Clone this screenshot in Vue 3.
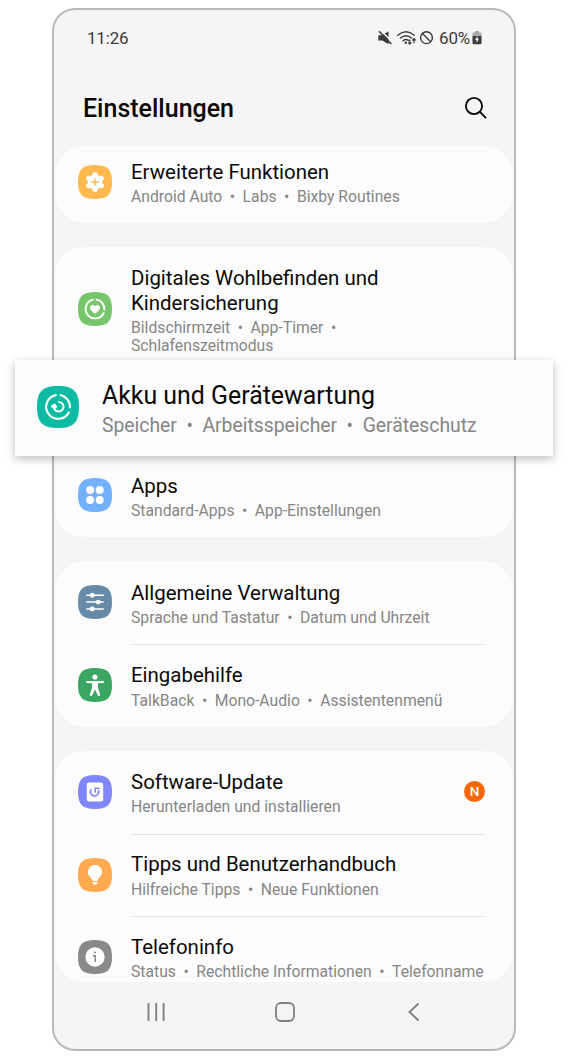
<script setup>
const cards = [
  { id: 'first', rows: [
    { icon: 'advanced', color: '#ffb94e', title: ['Erweiterte Funktionen'], sub: [['Android Auto', 'Labs', 'Bixby Routines']] },
  ] },
  { id: 'care', rows: [
    { icon: 'wellbeing', color: '#77c66e', title: ['Digitales Wohlbefinden und', 'Kindersicherung'], sub: [['Bildschirmzeit', 'App-Timer', ''], ['Schlafenszeitmodus']], tall: true },
    { icon: 'battery', color: '#0dbba4', title: ['Akku und Gerätewartung'], sub: [['Speicher', 'Arbeitsspeicher', 'Geräteschutz']], raised: true },
    { icon: 'apps', color: '#74b1fd', title: ['Apps'], sub: [['Standard-Apps', 'App-Einstellungen']] },
  ] },
  { id: 'general', rows: [
    { icon: 'sliders', color: '#678ba6', title: ['Allgemeine Verwaltung'], sub: [['Sprache und Tastatur', 'Datum und Uhrzeit']] },
    { icon: 'access', color: '#3ba662', title: ['Eingabehilfe'], sub: [['TalkBack', 'Mono-Audio', 'Assistentenmenü']], divider: true },
  ] },
  { id: 'last', rows: [
    { icon: 'update', color: '#8087fb', title: ['Software-Update'], sub: [['Herunterladen und installieren']], badge: 'N' },
    { icon: 'tips', color: '#ffaa4e', title: ['Tipps und Benutzerhandbuch'], sub: [['Hilfreiche Tipps', 'Neue Funktionen']], divider: true },
    { icon: 'info', color: '#898989', title: ['Telefoninfo'], sub: [['Status', 'Rechtliche Informationen', 'Telefonname']], divider: true },
  ] },
]
</script>

<template>
  <div class="page">
    <div class="phone">
      <div class="status">
        <span class="time">11:26</span>
        <svg class="status-icons" width="58" height="18" viewBox="0 0 58 18">
          <path d="M.3 6.200h4L10.500 2.200v13L4.300 11.500h-4z" fill="#3c3c3c" />
          <path d="M2.800 1.500 14.500 13.300" stroke="#f5f5f5" stroke-width="1.500" />
          <path d="M1 2.200 13.300 15" stroke="#3c3c3c" stroke-width="1.600" />
          <g fill="none" stroke="#3c3c3c" stroke-width="1.400" stroke-linecap="round">
            <path d="M19.800 6.200Q28 -.8 36.200 6.200M22.400 9Q28 4.300 33.600 9M25 11.700Q28 9.400 30.500 11.400" />
            <circle cx="48.500" cy="8.700" r="5.900" />
            <path d="m44.500 4.600 8.100 8.100" />
          </g>
          <circle cx="27.800" cy="13.800" r="1.200" fill="#3c3c3c" />
          <path d="M31.800 10.500v4.500m-1.700-1.700 1.700 1.900 1.700-1.900M36 14.300V9.800m-1.700 1.700L36 9.600l1.700 1.900" fill="none" stroke="#3c3c3c" stroke-width="1.200" />
        </svg>
        <span class="percent">60%</span>
        <svg width="10" height="14" viewBox="0 0 10 14">
          <path d="M3 0h4v1.500h1.500q1 0 1 1V6H.5V2.500q0-1 1-1H3z" fill="#aaa" />
          <path d="M.5 5h9v7q0 1.300-1.300 1.300H1.800Q.5 13.300.5 12z" fill="#3c3c3c" />
          <path d="M5.800 4.800 3 8.800h1.700L4.300 12 7 7.700H5.400z" fill="#fff" />
        </svg>
      </div>

      <header class="heading">
        <h1>Einstellungen</h1>
        <svg width="24" height="24" viewBox="0 0 24 24" fill="none" stroke="#0a0a0a" stroke-width="1.900" stroke-linecap="round">
          <circle cx="10" cy="10" r="8.100" /><path d="m15.900 15.900 5.700 5.700" />
        </svg>
      </header>

      <main class="list">
        <section v-for="card in cards" :key="card.id" class="card" :class="card.id">
          <div v-for="row in card.rows" :key="row.icon" class="slot" :class="{ tall: row.tall }">
            <div class="row" :class="{ raised: row.raised, divider: row.divider }">
              <svg class="icon" viewBox="0 0 34 34">
                <path d="M17 0C29.500 0 34 4.500 34 17S29.500 34 17 34 0 29.500 0 17 4.500 0 17 0Z" :fill="row.color" />
                <g v-if="row.icon === 'advanced'">
                  <g fill="#fff">
                    <circle cx="17" cy="17" r="7.500" />
                    <rect v-for="a in [0, 60, 120]" :key="a" x="14.500" y="7.300" width="5" height="19.400" rx="1.500" :transform="`rotate(${a} 17 17)`" />
                  </g>
                  <path d="M17 13.200v7.600M13.200 17h7.600" :stroke="row.color" stroke-width="1.500" />
                </g>
                <g v-else-if="row.icon === 'wellbeing'" fill="none" stroke="#fff" stroke-width="1.900" stroke-linecap="round">
                  <path d="M18.600 7.600A9.500 9.500 0 0 1 26.400 17.500M25.600 21.200A9.500 9.500 0 1 1 14.800 7.700" />
                  <path d="M17 21.800c-1.500-1.300-5-3.600-5-6.300 0-2.500 3.500-3.400 5-1 1.500-2.400 5-1.500 5 1 0 2.700-3.500 5-5 6.300Z" fill="#fff" stroke="none" />
                </g>
                <g v-else-if="row.icon === 'battery'" fill="none" stroke="#fff" stroke-width="1.700" stroke-linecap="round">
                  <path d="M19.200 7.400A9.700 9.700 0 0 1 26.700 17.300M25.800 21.300A9.700 9.700 0 1 1 15.200 7.400" />
                  <path d="M17.800 12.900A3.900 3.900 0 1 1 14.200 18.800" />
                  <path d="M11.600 16.400 14.300 14.600l1.700 2.200-2 1.400Z" fill="#fff" stroke-width="1" stroke-linejoin="round" />
                </g>
                <g v-else-if="row.icon === 'apps'" fill="#fff">
                  <circle cx="12.100" cy="12.100" r="4" /><circle cx="21.700" cy="12.100" r="4" />
                  <circle cx="12.100" cy="21.900" r="4" /><circle cx="21.700" cy="21.900" r="4" />
                </g>
                <g v-else-if="row.icon === 'sliders'" fill="#fff" stroke="#fff" stroke-width="1.500" stroke-linecap="round">
                  <path d="M8.800 10.200h16.400M8.800 17.100h16.400M8.800 24h16.400" />
                  <circle cx="14.300" cy="10.200" r="1.700" /><circle cx="20.200" cy="17.100" r="1.700" /><circle cx="14.300" cy="24" r="1.700" />
                </g>
                <g v-else-if="row.icon === 'access'" fill="#fff">
                  <circle cx="17" cy="9" r="2.600" />
                  <path d="M9 13h16a1 1 0 0 1 0 2l-5 .3v3.900l2 7.300a1.150 1.150 0 0 1-2.200.8L17 21.600l-2.800 5.700a1.150 1.150 0 0 1-2.200-.8l2-7.300v-3.900L9 15a1 1 0 0 1 0-2Z" />
                </g>
                <g v-else-if="row.icon === 'update'">
                  <rect x="8.800" y="7.600" width="16.400" height="19" rx="2.300" fill="#fff" />
                  <path d="M13.300 14.300A4.100 4.100 0 1 0 20.300 15M17.200 17.400v-4.200h4.300" fill="none" :stroke="row.color" stroke-width="1.600" />
                </g>
                <g v-else-if="row.icon === 'tips'" fill="#fff">
                  <path d="M17 7a7 7 0 0 1 4.200 12.600q-1 .8-1.200 2.500-.1.800-.9.800h-4.200q-.8 0-.9-.8-.2-1.700-1.200-2.500A7 7 0 0 1 17 7ZM14.100 24.100h5.800q-.5 2.600-2.900 2.900-2.400-.3-2.900-2.900Z" />
                </g>
                <g v-else>
                  <circle cx="17" cy="17" r="9.700" fill="#fff" />
                  <circle cx="16.900" cy="12.500" r="1.100" :fill="row.color" />
                  <path d="M14.800 15.800h2.400v6.300" fill="none" :stroke="row.color" stroke-width="1.500" />
                </g>
              </svg>
              <div class="text">
                <div v-for="line in row.title" :key="line" class="title">{{ line }}</div>
                <div class="subs">
                  <div v-for="(line, n) in row.sub" :key="n" class="sub">
                    <template v-for="(part, i) in line" :key="i"><i v-if="i" class="dot">•</i><span>{{ part }}</span></template>
                  </div>
                </div>
              </div>
              <span v-if="row.badge" class="badge">{{ row.badge }}</span>
            </div>
          </div>
        </section>
      </main>

      <nav class="nav">
        <svg width="20" height="20" viewBox="0 0 20 20" stroke="#808080" stroke-width="1.900"><path d="M2.500 1v18M10.200 1v18M17.600 1v18" /></svg>
        <svg width="20" height="20" viewBox="0 0 20 20" fill="none" stroke="#808080" stroke-width="1.800"><rect x="1" y="1" width="18" height="18" rx="5" /></svg>
        <svg width="20" height="20" viewBox="0 0 20 20" fill="none" stroke="#808080" stroke-width="1.900"><path d="M14.500 1.500 5.500 10l9 8.500" /></svg>
      </nav>
    </div>
  </div>
</template>

<style>
body { background: #fff; }
</style>

<style scoped>
.page { width: 568px; height: 1058px; padding: 8px 52px 0; box-sizing: border-box; font-family: Roboto, "Liberation Sans", sans-serif; }
.phone { width: 464px; height: 1043px; box-sizing: border-box; border: 2px solid #b9b9b9; border-radius: 23px; background: #f5f5f5; display: flex; flex-direction: column; }
.status { display: flex; align-items: center; height: 56px; padding: 0 32px 0 33px; color: #3c3c3c; font-size: 17px; }
.time { flex: 1; letter-spacing: -.2px; }
.status-icons { margin-right: 3px; }
.percent { margin-right: 2px; letter-spacing: -.2px; }
.heading { display: flex; align-items: center; justify-content: space-between; height: 80px; padding: 4px 26px 0 29px; box-sizing: border-box; }
h1 { margin: 0; font-size: 25px; font-weight: 500; color: #0a0a0a; }
.list { display: flex; flex-direction: column; gap: 24px; }
.card { background: #fcfcfc; border-radius: 31px; display: flex; flex-direction: column; }
.first { height: 77px; overflow: hidden; justify-content: flex-end; }
.care { height: 290px; }
.general { height: 166px; }
.last { height: 231px; overflow: hidden; }
.slot { position: relative; flex: none; height: 82.600px; }
.slot.tall { height: 124.600px; }
.row { position: relative; display: flex; align-items: center; height: 100%; padding: 0 29px 0 24px; box-sizing: border-box; }
.divider::before { content: ""; position: absolute; left: 77px; right: 29px; top: 0; height: 1px; background: #e2e2e2; }
.icon { width: 34px; height: 34px; flex: none; margin-right: 19px; }
.text { flex: 1; white-space: nowrap; padding-top: 3px; }
.last .text { padding-top: 1px; }
.title { font-size: 20.450px; line-height: 24.500px; color: #0a0a0a; }
.subs { margin-top: 4px; }
.sub { font-size: 15.720px; line-height: 18px; color: #868686; }
.dot { display: inline-block; width: 20.300px; text-align: center; font-style: normal; }
.badge { width: 21px; height: 21px; border-radius: 50%; background: #f76707; color: #fff; font-size: 13.500px; font-weight: 500; line-height: 21px; text-align: center; margin-top: -1px; }
.raised { position: absolute; z-index: 2; left: -39px; top: -12px; width: 538px; height: 96px; padding: 0 22px; background: #fcfcfc; box-shadow: 0 3px 9px rgba(0, 0, 0, .25); }
.raised .icon { width: 42px; height: 42px; margin-right: 23px; margin-top: -2px; }
.raised .text { margin-top: 2px; padding-top: 2px; }
.raised .title { font-size: 24.900px; line-height: 30px; }
.raised .subs { margin-top: 2px; }
.raised .sub { font-size: 19.350px; line-height: 26px; }
.raised .dot { width: 25.500px; }
.nav { display: flex; justify-content: space-between; padding: 20px 90px 0 92px; }
</style>
